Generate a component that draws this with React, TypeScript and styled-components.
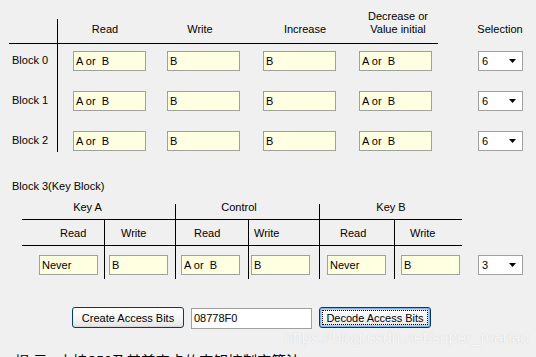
import React from "react";
import styled, { createGlobalStyle } from "styled-components";

const GlobalStyle = createGlobalStyle`
  html, body { margin: 0; padding: 0; }
  body {
    background: #f0f0f0;
    font-family: "Liberation Sans", Arial, sans-serif;
    font-size: 11px;
    color: #000;
  }
  #root { width: 536px; height: 357px; overflow: hidden; }
`;

const Page = styled.div`
  position: relative;
  width: 536px;
  height: 357px;
  overflow: hidden;
  box-sizing: border-box;
  padding: 19px 0 0 9px;
  line-height: 13px;
`;

const UpperGrid = styled.div`
  display: grid;
  grid-template-columns: 48px 1px 94px 96px 96px 94px 98px;
  grid-template-rows: 24px 1px 40px 40px 28px;
`;

const VLine = styled.div<{ $col: number; $rows: string; $top?: number }>`
  grid-column: ${(p) => p.$col};
  grid-row: ${(p) => p.$rows};
  margin-top: ${(p) => p.$top ?? 0}px;
  background: #000;
`;

const HLine = styled.div<{ $cols: string; $row: number }>`
  grid-column: ${(p) => p.$cols};
  grid-row: ${(p) => p.$row};
  background: #000;
`;

const HeaderCell = styled.div<{ $col: number; $pl?: number }>`
  grid-row: 1;
  grid-column: ${(p) => p.$col};
  display: flex;
  flex-direction: column;
  justify-content: flex-end;
  text-align: center;
  padding: 0 0 7px ${(p) => p.$pl ?? 0}px;
  white-space: nowrap;
`;

const RowLabel = styled.div<{ $row: number }>`
  grid-column: 1;
  grid-row: ${(p) => p.$row};
  padding: 10px 0 0 3px;
  white-space: nowrap;
`;

const Cell = styled.div<{ $row: number; $col: number; $pt: number; $pl?: number }>`
  grid-row: ${(p) => p.$row};
  grid-column: ${(p) => p.$col};
  padding: ${(p) => p.$pt}px 0 0 ${(p) => p.$pl ?? 0}px;
`;

const Field = styled.div<{ $w: number }>`
  box-sizing: border-box;
  width: ${(p) => p.$w}px;
  height: 20px;
  border: 1px solid #a0a0a0;
  background: #ffffe1;
  padding-left: 2px;
  display: flex;
  align-items: center;
  white-space: pre;
`;

const Combo = styled.div`
  box-sizing: border-box;
  width: 45px;
  height: 20px;
  border: 1px solid #a0a0a0;
  background: #fff;
  display: flex;
  align-items: center;
  justify-content: space-between;
  padding: 0 6px 0 3px;
`;

const BlockTitle = styled.div`
  margin-top: 28px;
  padding-left: 3px;
`;

const LowerGrid = styled.div`
  margin: 8px 0 0 13px;
  display: grid;
  grid-template-columns: 82px 1px 70px 1px 72px 1px 70px 1px 74px 1px 67px 16px 45px;
  grid-template-rows: 18px 1px 25px 1px 33px;
`;

const GroupLabel = styled.div<{ $cols: string; $pr?: number }>`
  grid-row: 1;
  grid-column: ${(p) => p.$cols};
  text-align: center;
  padding-right: ${(p) => p.$pr ?? 0}px;
  white-space: nowrap;
`;

const SubLabel = styled.div<{ $col: number; $pl: number }>`
  grid-row: 3;
  grid-column: ${(p) => p.$col};
  padding: 7px 0 0 ${(p) => p.$pl}px;
  white-space: nowrap;
`;

const ButtonRow = styled.div`
  display: flex;
  align-items: flex-start;
  gap: 7px;
  margin: 28px 0 0 63px;
`;

const Button = styled.button<{ $focused?: boolean }>`
  box-sizing: border-box;
  width: 112px;
  height: 21px;
  padding: 0;
  font-family: "Liberation Sans", Arial, sans-serif;
  font-size: 11px;
  color: #000;
  border: 1px solid #003c74;
  border-radius: 3px;
  background: linear-gradient(#ffffff, #f4f4f4 60%, #e2e2e2);
  box-shadow: ${(p) =>
    p.$focused
      ? "inset 0 0 0 1px #7eb4ea, inset 0 0 0 2px #b6d4f4"
      : "inset 0 -1px 0 #d8d8d8"};
  outline: ${(p) => (p.$focused ? "1px dotted #000" : "none")};
  outline-offset: -4px;
`;

const TextBox = styled.div`
  box-sizing: border-box;
  width: 121px;
  height: 21px;
  margin-top: 1px;
  border: 1px solid #a0a0a0;
  background: #fff;
  padding-left: 2px;
  display: flex;
  align-items: center;
`;

const Hint = styled.div`
  margin: 25px 0 0 6px;
  font-family: "Noto Sans CJK SC", "Liberation Sans", sans-serif;
  font-size: 14.5px;
  line-height: 14.5px;
  white-space: nowrap;
`;

const Spaced = styled.span`
  letter-spacing: 3.5px;
`;

const Watermark = styled.div`
  position: absolute;
  left: 284px;
  top: 329px;
  font-family: "Liberation Sans", Arial, sans-serif;
  font-size: 16px;
  line-height: 18px;
  color: rgba(255, 255, 255, 0.85);
  text-shadow: 0 0 1px rgba(150, 150, 150, 0.45);
  white-space: nowrap;
  pointer-events: none;
`;

const Arrow = () => (
  <svg width="7" height="4" viewBox="0 0 7 4">
    <polygon points="0,0 7,0 3.5,4" fill="#000" />
  </svg>
);

const upperRows = [
  { label: "Block 0", values: ["A or  B", "B", "B", "A or  B"], sel: "6" },
  { label: "Block 1", values: ["A or  B", "B", "B", "A or  B"], sel: "6" },
  { label: "Block 2", values: ["A or  B", "B", "B", "A or  B"], sel: "6" },
];

const subLabels = [
  { col: 1, pl: 38, text: "Read" },
  { col: 3, pl: 16, text: "Write" },
  { col: 5, pl: 18, text: "Read" },
  { col: 7, pl: 5, text: "Write" },
  { col: 9, pl: 20, text: "Read" },
  { col: 11, pl: 15, text: "Write" },
];

const lowerFields = [
  { col: 1, pl: 17, text: "Never" },
  { col: 3, pl: 4, text: "B" },
  { col: 5, pl: 5, text: "A or  B" },
  { col: 7, pl: 2, text: "B" },
  { col: 9, pl: 7, text: "Never" },
  { col: 11, pl: 6, text: "B" },
];

export default function App() {
  return (
    <>
      <GlobalStyle />
      <Page>
        <UpperGrid>
          <VLine $col={2} $rows="1 / 6" />
          <HLine $cols="1 / 7" $row={2} />
          <HeaderCell $col={3}>Read</HeaderCell>
          <HeaderCell $col={4}>Write</HeaderCell>
          <HeaderCell $col={5} $pl={18}>Increase</HeaderCell>
          <HeaderCell $col={6} $pl={14}>
            Decrease or
            <br />
            Value initial
          </HeaderCell>
          <HeaderCell $col={7} $pl={26}>Selection</HeaderCell>
          {upperRows.map((r, i) => (
            <React.Fragment key={r.label}>
              <RowLabel $row={3 + i}>{r.label}</RowLabel>
              {r.values.map((v, j) => (
                <Cell key={j} $row={3 + i} $col={3 + j} $pt={7} $pl={15}>
                  <Field $w={73}>{v}</Field>
                </Cell>
              ))}
              <Cell $row={3 + i} $col={7} $pt={7} $pl={40}>
                <Combo>
                  <span>{r.sel}</span>
                  <Arrow />
                </Combo>
              </Cell>
            </React.Fragment>
          ))}
        </UpperGrid>

        <BlockTitle>Block 3(Key Block)</BlockTitle>

        <LowerGrid>
          <VLine $col={4} $rows="1 / 6" $top={3} />
          <VLine $col={8} $rows="1 / 6" $top={3} />
          <VLine $col={2} $rows="2 / 6" />
          <VLine $col={6} $rows="2 / 6" />
          <VLine $col={10} $rows="2 / 6" />
          <HLine $cols="1 / 12" $row={2} />
          <HLine $cols="1 / 12" $row={4} />
          <GroupLabel $cols="1 / 4" $pr={22}>Key A</GroupLabel>
          <GroupLabel $cols="5 / 8" $pr={17}>Control</GroupLabel>
          <GroupLabel $cols="9 / 12">Key B</GroupLabel>
          {subLabels.map((s) => (
            <SubLabel key={s.col} $col={s.col} $pl={s.pl}>
              {s.text}
            </SubLabel>
          ))}
          {lowerFields.map((f) => (
            <Cell key={f.col} $row={5} $col={f.col} $pt={9} $pl={f.pl}>
              <Field $w={59}>{f.text}</Field>
            </Cell>
          ))}
          <Cell $row={5} $col={13} $pt={9}>
            <Combo>
              <span>3</span>
              <Arrow />
            </Combo>
          </Cell>
        </LowerGrid>

        <ButtonRow>
          <Button>Create Access Bits</Button>
          <TextBox>08778F0</TextBox>
          <Button $focused>Decode Access Bits</Button>
        </ButtonRow>

        <Hint>
          <Spaced>提示</Spaced>: 支持S50及其兼容卡的密钥控制字算法
        </Hint>

        <Watermark>https://blog.csdn.net/super_mariao</Watermark>
      </Page>
    </>
  );
}
